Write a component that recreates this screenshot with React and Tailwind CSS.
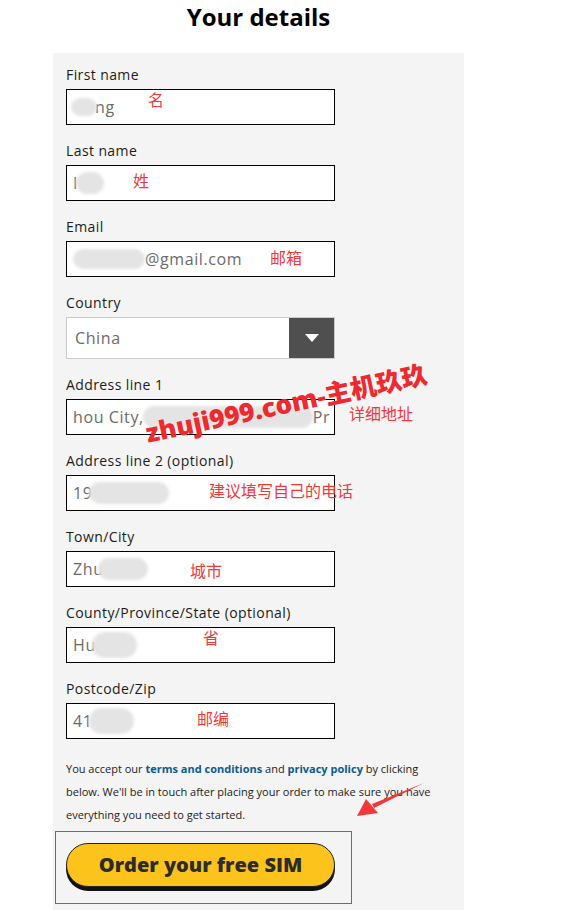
import React from 'react';

const font = { fontFamily: '"Open Sans", "Noto Sans CJK SC", sans-serif' };

function Blur({ className }) {
    return <span className={`inline-block rounded-full bg-[#e4e4e4] blur-[1.5px] ${className}`} />;
}

function Field({ label, children, last }) {
    return (
        <div className={last ? '' : 'mb-4'}>
            <div className="h-5 leading-5 text-[14px] tracking-[0.4px] text-[#1c1c1c] mb-1">{label}</div>
            {children}
        </div>
    );
}

function Box({ children }) {
    return (
        <div className="h-9 w-[269px] border border-black bg-white flex items-center pl-[6px] text-[16px] tracking-[0.6px] text-[#6b6b6b] overflow-hidden whitespace-nowrap">
            {children}
        </div>
    );
}

const Note = ({ className, children }) => (
    <span className={`absolute text-[16px] leading-5 text-[#f2383b] ${className}`}>{children}</span>
);

export default function App() {
    return (
        <div className="relative w-[576px] h-[910px] bg-white overflow-hidden" style={font}>
            <div className="w-[411px] ml-[53px]">
                <h1 className="h-[53px] leading-[34px] text-center text-[24px] font-bold text-black">Your details</h1>
                <div className="bg-[#f4f4f4] pt-3 pl-[13px] pr-[13px] pb-10 min-h-[857px]">
                    <Field label="First name">
                        <Box><Blur className="w-[26px] h-[18px] -ml-[2px]" /><span className="-ml-[2px]">ng</span></Box>
                    </Field>
                    <Field label="Last name">
                        <Box><span>I</span><Blur className="w-[28px] h-[22px] -ml-[2px]" /></Box>
                    </Field>
                    <Field label="Email">
                        <Box><Blur className="w-[72px] h-[20px]" /><span>@gmail.com</span></Box>
                    </Field>
                    <Field label="Country">
                        <div className="h-[42px] w-[269px] border border-[#cccccc] bg-white flex">
                            <div className="flex-1 flex items-center pl-2 text-[16px] tracking-[0.6px] text-[#6b6b6b]">China</div>
                            <div className="w-[45px] bg-[#4f4f4f] flex items-center justify-center">
                                <svg width="16" height="8" viewBox="0 0 16 8"><path d="M1 0h14L8 8z" fill="#fff" /></svg>
                            </div>
                        </div>
                    </Field>
                    <Field label="Address line 1">
                        <Box><span>hou City,</span><Blur className="w-[170px] h-[22px] -ml-[1px]" /><span>Pr</span></Box>
                    </Field>
                    <Field label="Address line 2 (optional)">
                        <Box><span>19</span><Blur className="w-[80px] h-[22px] -ml-[4px]" /></Box>
                    </Field>
                    <Field label="Town/City">
                        <Box><span>Zhu</span><Blur className="w-[50px] h-[22px] -ml-[6px]" /></Box>
                    </Field>
                    <Field label="County/Province/State (optional)">
                        <Box><span>Hu</span><Blur className="w-[45px] h-[26px] -ml-[4px]" /></Box>
                    </Field>
                    <Field label="Postcode/Zip" last>
                        <Box><span>41</span><Blur className="w-[45px] h-[26px] -ml-[4px]" /></Box>
                    </Field>
                    <p className="mt-[18px] text-[11px] leading-[23px] text-[#222] pr-1">
                        You accept our <a className="font-bold text-[#0c5a8e]">terms and conditions</a> and{' '}
                        <a className="font-bold text-[#0c5a8e]">privacy policy</a> by clicking below. We'll be in touch after placing your order to make sure you have everything you need to get started.
                    </p>
                    <button className="mt-[17px] w-[269px] h-[44px] rounded-full bg-[#fcc31c] border border-[#222] shadow-[0_4px_0_#111] text-[20px] font-extrabold text-[#2c2c2c]">
                        Order your free SIM
                    </button>
                </div>
            </div>

            <Note className="left-[148px] top-[90px]">名</Note>
            <Note className="left-[133px] top-[171px]">姓</Note>
            <Note className="left-[270px] top-[248px]">邮箱</Note>
            <Note className="left-[349px] top-[404px]">详细地址</Note>
            <Note className="left-[209px] top-[481px]">建议填写自己的电话</Note>
            <Note className="left-[190px] top-[561px]">城市</Note>
            <Note className="left-[203px] top-[628px]">省</Note>
            <Note className="left-[197px] top-[709px]">邮编</Note>

            <div className="absolute left-[146px] top-[420px] origin-left -rotate-[12deg] text-[26px] font-black leading-none text-[#ee2a2f] whitespace-nowrap">
                zhuji999.com-主机玖玖
            </div>

            <div className="absolute left-[55px] top-[831px] w-[297px] h-[73px] border border-[#e23b3b]" />

            <svg className="absolute left-0 top-0 pointer-events-none" width="576" height="910">
                <path d="M424 783 L372 804 L374 808 Z" fill="#f2383b" />
                <path d="M357 816 L366 799 L378 813 Z" fill="#f2383b" />
            </svg>
        </div>
    );
}
